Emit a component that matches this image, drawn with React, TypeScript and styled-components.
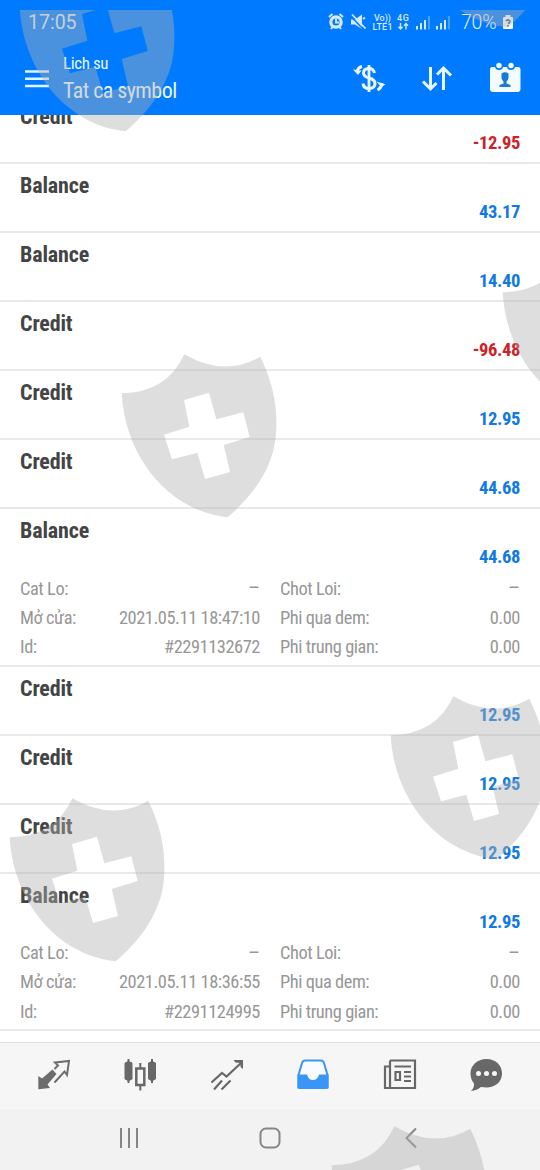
import React from "react";
import styled, { createGlobalStyle } from "styled-components";

const GlobalStyle = createGlobalStyle`
  * { box-sizing: border-box; }
  body { margin: 0; background: #fff; }
`;

const Screen = styled.div`
  position: relative;
  width: 540px;
  height: 1170px;
  overflow: hidden;
  display: flex;
  flex-direction: column;
  background: #fff;
  font-family: "Roboto Condensed", Roboto, sans-serif;
  font-stretch: 75%;
`;

const Header = styled.header`
  height: 115px;
  flex: none;
  background: #007aff;
  color: #e9f7ff;
`;

const StatusBar = styled.div`
  height: 44px;
  display: flex;
  align-items: center;
  padding: 0 26px 0 28px;
  font-family: Roboto, sans-serif;
  font-stretch: 100%;
  color: #d5e6f8;
`;

const Clock = styled.span`
  flex: 1;
  font-size: 19.5px;
`;

const StatusIcons = styled.div`
  display: flex;
  align-items: center;
  height: 20px;
`;

const Percent = styled.span`
  margin-left: 8px;
  font-size: 19.5px;
  font-weight: 350;
  letter-spacing: -0.2px;
  width: 41px;
  color: #e2effc;
`;

const AppBar = styled.div`
  height: 71px;
  display: flex;
  align-items: flex-start;
  padding: 9px 18px 0 25px;
`;

const Titles = styled.div`
  flex: 1;
  display: flex;
  flex-direction: column;
  margin-left: 14px;
`;

const Subtitle = styled.span`
  font-size: 17px;
  line-height: 21px;
  letter-spacing: -0.4px;
`;

const Title = styled.span`
  font-size: 22px;
  line-height: 33px;
  letter-spacing: -0.55px;
`;

const Actions = styled.div`
  display: flex;
  gap: 35px;
  padding-top: 8px;
`;

const List = styled.main`
  height: 928px;
  flex: none;
  overflow: hidden;
  border-bottom: 1px solid #e0e0e0;
`;

const Entries = styled.div`
  margin-top: -20px;
`;

const Entry = styled.section<{ $open?: boolean }>`
  height: ${(p) => (p.$open ? 157.5 : 69)}px;
  border-bottom: 2px solid #e9e9e9;
  padding: 8px 20px 0;
`;

const EntryName = styled.div`
  font-size: 22px;
  font-weight: 700;
  line-height: 28px;
  letter-spacing: -0.15px;
  color: #444;
`;

const Amount = styled.div<{ $negative?: boolean }>`
  font-size: 18.6px;
  font-weight: 700;
  line-height: 24px;
  letter-spacing: -0.4px;
  text-align: right;
  color: ${(p) => (p.$negative ? "#cc2228" : "#107ae2")};
`;

const Details = styled.div`
  display: grid;
  grid-template-columns: 1fr 1fr;
  column-gap: 20px;
  grid-auto-rows: 29.2px;
  padding-top: 4.6px;
`;

const Detail = styled.div`
  display: flex;
  justify-content: space-between;
  align-items: center;
  font-size: 18.4px;
  letter-spacing: -0.45px;
  color: #979797;
`;

const Dash = styled.span`
  font-size: 21px;
  line-height: 20px;
  letter-spacing: 0;
`;

const TabBar = styled.nav`
  height: 66px;
  flex: none;
  display: grid;
  grid-template-columns: repeat(6, 86.4px);
  justify-content: center;
  justify-items: center;
  padding-top: 15px;
  background: #f6f6f6;
`;

const SystemBar = styled.footer`
  flex: 1;
  display: grid;
  grid-template-columns: repeat(3, 140.7px);
  align-items: center;
  justify-items: center;
  padding: 0 0 4px 59px;
  background: #f2f2f2;
`;

const Watermark = styled.div`
  position: absolute;
  inset: 10px 0 0 0;
  overflow: hidden;
  pointer-events: none;
`;

const ShieldSvg = styled.svg<{ $x: number; $y: number }>`
  position: absolute;
  left: ${(p) => p.$x}px;
  top: ${(p) => p.$y - 10}px;
`;

const shields = [
  [19.3, -32.2],
  [401, -136],
  [121, 354],
  [502, 253],
  [390, 695.7],
  [9, 798.4],
  [331, 1125.7],
];

const Shield = ({ x, y }: { x: number; y: number }) => (
  <ShieldSvg $x={x} $y={y} width="156" height="164" viewBox="63 42 468 492">
    <path
      fill="#b0b0b0"
      fillOpacity=".42"
      fillRule="evenodd"
      d="M65 160Q201 158 253 43Q373 113 481 50C515 120 531 185 529 260C529 380 455 470 383 532C205 513 75 350 65 160ZM252 180L327 158L349 238L430 217L449 291L371 315L390 396L315 417L292 338L216 358L192 284L268 260Z"
    />
  </ShieldSvg>
);

const StatusGlyphs = () => (
  <svg width="126" height="20" viewBox="0 0 126 20" fill="none" stroke="#d5e9fb">
    <circle cx="9" cy="10" r="5.2" strokeWidth="3.2" />
    <path d="M9 6.5V10.5H12M2 5L5.5 2M16 5L12.500 2M4 17L5.500 15M14 17L12.500 15" strokeWidth="1.9" />
    <path d="M24 7.500H28L35 2.500V17L28 12.500H24Z" fill="#d5e9fb" stroke="none" />
    <path d="M24.500 5L37 18" stroke="#007aff" strokeWidth="1.5" />
    <path d="M25 2.500L38.500 16.500M36 7L38 5.500" strokeWidth="1.800" />
    <g fill="#d5e9fb" stroke="none" fontFamily="Roboto, sans-serif" fontWeight="500">
      <text x="47" y="8.500" fontSize="9" textLength="17">Vo))</text>
      <text x="45.500" y="18" fontSize="9" textLength="20">LTE1</text>
      <text x="70" y="9" fontSize="9" textLength="12">4G</text>
    </g>
    <path d="M73.500 11V17M71.500 14.800L73.500 17L75.500 14.800M79 17.500V11.500M77 13.700L79 11.500L81 13.700" strokeWidth="1.400" />
    <path d="M90 14V17.500M94 11V17.500M98 8V17.500M110 14V17.500M114 11V17.500M118 8V17.500" strokeWidth="2" />
    <path d="M102 4V17.500M122 4V17.500" strokeWidth="1.500" opacity=".45" />
  </svg>
);

const Battery = () => (
  <svg width="12" height="16" viewBox="0 0 12 16">
    <path d="M3.500 1H8.500V3H10Q11 3 11 4V14Q11 15 10 15H2Q1 15 1 14V4Q1 3 2 3H3.500Z" fill="#f4f9ff" />
    <path d="M4 7Q6 5 7.500 6.500Q8.500 8.500 6 9.500M6 11V12.500" fill="none" stroke="#3f5f84" strokeWidth="1.700" />
  </svg>
);

const MenuSvg = styled.svg`
  margin-top: 17px;
`;

const MenuIcon = () => (
  <MenuSvg width="24" height="18" viewBox="0 0 24 18">
    <path d="M0 1.500H24M0 8.800H24M0 16H24" stroke="#dff5ff" strokeWidth="2.600" />
  </MenuSvg>
);

const DollarIcon = () => (
  <svg width="34" height="34" viewBox="0 0 34 34" fill="none" stroke="#e8f8ff">
    <path d="M17 4V31" strokeWidth="2.800" />
    <path d="M22.500 12Q21.500 7.500 17 7.500Q11.500 7.500 11.500 12Q11.500 15.500 17 17Q23 18.500 23 22.500Q23 27.500 17 27.500Q11.500 27.500 11 22.500" strokeWidth="3" />
    <path d="M10 5.500Q6 6.500 5 10.500M25.500 29Q29.500 27 30 22" strokeWidth="3" />
    <path d="M1 8.500L9.500 9.500L6 14Z M33.500 23.500L24.500 20.500L29 26Z" fill="#e8f8ff" stroke="none" />
  </svg>
);

const SortIcon = () => (
  <svg width="32" height="34" viewBox="0 0 32 34" fill="none" stroke="#e8f8ff" strokeWidth="3">
    <path d="M9.500 6V28M2 20.500L9.500 28L15.500 22M22.500 29V7M16 13.500L22.500 7L30 14.500" />
  </svg>
);

const CalendarIcon = () => (
  <svg width="34" height="34" viewBox="0 0 34 34">
    <path fill="#f3fbff" d="M4 6H30Q32.500 6 32.500 9V28Q32.500 31 29.500 31H5Q2 31 2 28V9Q2 6 4 6Z" />
    <circle cx="11" cy="5" r="4" fill="#007aff" />
    <circle cx="23" cy="5" r="4" fill="#007aff" />
    <circle cx="11" cy="4.500" r="2.700" fill="#f3fbff" />
    <circle cx="23" cy="4.500" r="2.700" fill="#f3fbff" />
    <path fill="#177bd8" d="M13.500 12.500Q17 10 20.500 12.500V17Q20 19.500 18.500 20.500V22.500L22.500 24V26H11.500V24L15.500 22.500V20.500Q14 19.500 13.500 17Z" />
  </svg>
);

const QuotesIcon = () => (
  <svg width="34" height="34" viewBox="0 0 34 34">
    <path fill="#6d6d6d" d="M1.300 18L5 20.500L15.500 11.500L19.500 16L10.500 26.500L13 30L1.300 31.300Z" />
    <path fill="none" stroke="#6d6d6d" strokeWidth="2" d="M17.500 11L21 7.500L18 4.500L32 3L30 17L27.500 13.500L17.500 24.500" />
  </svg>
);

const CandlesIcon = () => (
  <svg width="34" height="34" viewBox="0 0 34 34" stroke="#686868">
    <path d="M5.500 1V25M29 1V25M17.300 5V32.500" strokeWidth="2" />
    <path d="M2 5Q5.500 2 9 5V21Q5.500 24 2 21ZM25.500 5Q29 2 32.500 5V21Q29 24 25.500 21Z" fill="#686868" strokeWidth="1" />
    <path d="M13.300 10.500H21.300V27H13.300Z" fill="#f6f6f6" strokeWidth="2.500" />
  </svg>
);

const TrendIcon = () => (
  <svg width="34" height="34" viewBox="0 0 34 34" fill="none" stroke="#686868" strokeWidth="2.200">
    <path d="M1.500 24.500L12 15L16.500 18.500L31 5" />
    <path d="M4 31.500L12 22.500M11.500 31.500L20.500 22.500" />
    <path d="M23.500 2H33V11L30.500 9V5L25.500 4.500Z" fill="#686868" stroke="none" />
  </svg>
);

const TrayIcon = () => (
  <svg width="34" height="34" viewBox="0 0 34 34">
    <path d="M2.500 17L6 5Q7 2.500 9 2.500H25Q27 2.500 28 5L31.500 17V29.500H2.500Z" fill="#f9fcff" stroke="#3995f8" strokeWidth="2" />
    <path d="M1.500 16.500H11Q12.500 22 17 22Q21.500 22 23 16.500H32.500V28.500Q32.500 31 30 31H4Q1.500 31 1.500 28.500Z" fill="#3995f8" />
  </svg>
);

const NewsIcon = () => (
  <svg width="34" height="34" viewBox="0 0 34 34" fill="none" stroke="#686868" strokeWidth="2.200">
    <path d="M7 2.500H32V30H2V8.500H7M7 2.500V30" />
    <path d="M11.500 8.500H28M21 14H28M21 18.500H28M21 23H28" />
    <path d="M12.500 14H17V22H12.500Z" />
  </svg>
);

const ChatIcon = () => (
  <svg width="34" height="34" viewBox="0 0 34 34">
    <path fill="#686868" d="M17.500 1C27 1 33 7.500 33 15.500C33 24 26 29.500 17.500 29.500L12 29Q8 32.500 2 33Q5.500 29.500 5 25.500Q1.500 21.500 1.500 15.500C1.500 7.500 8 1 17.500 1Z" />
    <g fill="#f6f6f6">
      <circle cx="9.500" cy="15.500" r="2.500" />
      <circle cx="17.500" cy="15.500" r="2.500" />
      <circle cx="25.500" cy="15.500" r="2.500" />
    </g>
  </svg>
);

const RecentsIcon = () => (
  <svg width="20" height="22" viewBox="0 0 20 22">
    <path d="M2 1V21M10 1V21M18 1V21" stroke="#858585" strokeWidth="2" />
  </svg>
);

const HomeIcon = () => (
  <svg width="22" height="22" viewBox="0 0 22 22">
    <rect x="1.500" y="1.500" width="19" height="19" rx="5.500" fill="none" stroke="#858585" strokeWidth="2" />
  </svg>
);

const BackIcon = () => (
  <svg width="12" height="22" viewBox="0 0 12 22">
    <path d="M11 1.500L1.500 11L11 20.500" fill="none" stroke="#858585" strokeWidth="2" />
  </svg>
);

type Item = { name: string; amount: string; opened?: string; id?: string };

const items: Item[] = [
  { name: "Credit", amount: "-12.95" },
  { name: "Balance", amount: "43.17" },
  { name: "Balance", amount: "14.40" },
  { name: "Credit", amount: "-96.48" },
  { name: "Credit", amount: "12.95" },
  { name: "Credit", amount: "44.68" },
  { name: "Balance", amount: "44.68", opened: "2021.05.11 18:47:10", id: "#2291132672" },
  { name: "Credit", amount: "12.95" },
  { name: "Credit", amount: "12.95" },
  { name: "Credit", amount: "12.95" },
  { name: "Balance", amount: "12.95", opened: "2021.05.11 18:36:55", id: "#2291124995" },
];

const Field = ({ label, value }: { label: string; value?: string }) => (
  <Detail>
    <span>{label}</span>
    {value ? <span>{value}</span> : <Dash>–</Dash>}
  </Detail>
);

export default function App() {
  return (
    <Screen>
      <GlobalStyle />
      <Header>
        <StatusBar>
          <Clock>17:05</Clock>
          <StatusIcons>
            <StatusGlyphs />
            <Percent>70%</Percent>
            <Battery />
          </StatusIcons>
        </StatusBar>
        <AppBar>
          <MenuIcon />
          <Titles>
            <Subtitle>Lich su</Subtitle>
            <Title>Tat ca symbol</Title>
          </Titles>
          <Actions>
            <DollarIcon />
            <SortIcon />
            <CalendarIcon />
          </Actions>
        </AppBar>
      </Header>
      <List>
        <Entries>
          {items.map((item, i) => (
            <Entry key={i} $open={!!item.id}>
              <EntryName>{item.name}</EntryName>
              <Amount $negative={item.amount.startsWith("-")}>{item.amount}</Amount>
              {item.id && (
                <Details>
                  <Field label="Cat Lo:" />
                  <Field label="Chot Loi:" />
                  <Field label="Mở cửa:" value={item.opened} />
                  <Field label="Phi qua dem:" value="0.00" />
                  <Field label="Id:" value={item.id} />
                  <Field label="Phi trung gian:" value="0.00" />
                </Details>
              )}
            </Entry>
          ))}
        </Entries>
      </List>
      <TabBar>
        <QuotesIcon />
        <CandlesIcon />
        <TrendIcon />
        <TrayIcon />
        <NewsIcon />
        <ChatIcon />
      </TabBar>
      <SystemBar>
        <RecentsIcon />
        <HomeIcon />
        <BackIcon />
      </SystemBar>
      <Watermark>
        {shields.map(([x, y]) => (
          <Shield key={`${x}-${y}`} x={x} y={y} />
        ))}
      </Watermark>
    </Screen>
  );
}
